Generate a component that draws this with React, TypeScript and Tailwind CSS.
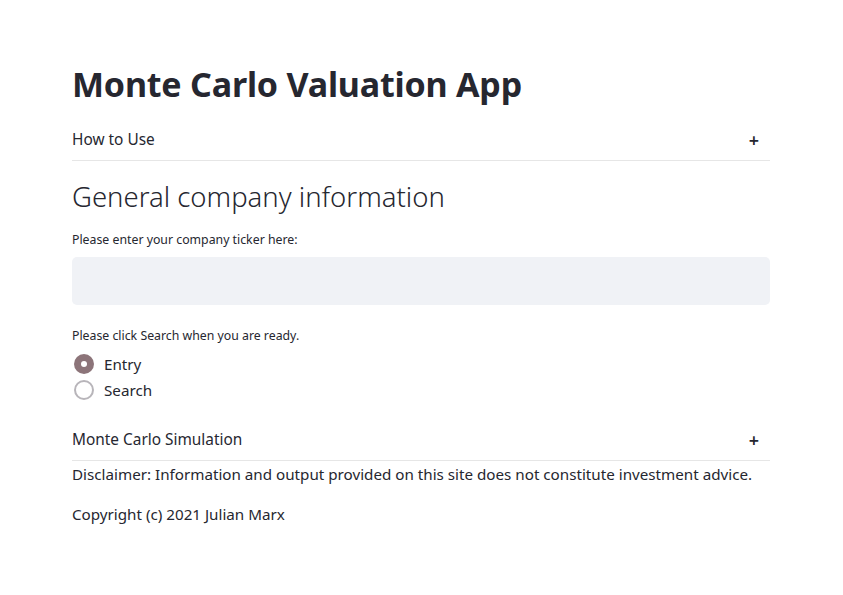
import { useState } from "react";

const font = { fontFamily: "'Noto Sans', 'Open Sans', sans-serif" };

function Expander({ title }: { title: string }) {
  return (
    <div className="flex items-center justify-between h-[42px] border-b border-[#e6e6e6]">
      <span className="text-[15.4px] font-normal text-[#262730]">{title}</span>
      <span className="text-[18px] font-semibold text-[#262730] leading-none mr-[11px]">+</span>
    </div>
  );
}

export default function App() {
  const [choice, setChoice] = useState("Entry");

  return (
    <div className="min-h-[595px] w-full bg-white" style={font}>
      <div className="w-[698px] ml-[72px] pt-[62px]">
        <h1 className="text-[34px] font-bold text-[#262730] leading-[44px] tracking-[-0.2px]">
          Monte Carlo Valuation App
        </h1>

        <div className="mt-[13px]">
          <Expander title="How to Use" />
        </div>

        <h2 className="mt-[19px] text-[27.5px] font-light text-[#262730] leading-[34px]">
          General company information
        </h2>

        <p className="mt-[18px] text-[12.3px] text-[#262730] leading-[16px]">
          Please enter your company ticker here:
        </p>
        <div className="mt-[9px] h-[48px] rounded-[5px] bg-[#f0f2f6]" />

        <p className="mt-[23px] text-[12.3px] text-[#262730] leading-[16px]">
          Please click Search when you are ready.
        </p>
        <div className="mt-[10px] flex flex-col gap-[6px]">
          {["Entry", "Search"].map((opt) => {
            const on = choice === opt;
            return (
              <label
                key={opt}
                className="flex items-center gap-[10px] h-[20px] cursor-pointer"
                onClick={() => setChoice(opt)}
              >
                <span
                  className={
                    on
                      ? "w-[20px] h-[20px] rounded-full bg-[#8c7479] flex items-center justify-center ml-[2px]"
                      : "w-[20px] h-[20px] rounded-full border-2 border-[#b8b5ba] bg-white ml-[2px]"
                  }
                >
                  {on && <span className="w-[6px] h-[6px] rounded-full bg-white" />}
                </span>
                <span className="text-[15.2px] text-[#262730]">{opt}</span>
              </label>
            );
          })}
        </div>

        <div className="mt-[19px]">
          <Expander title="Monte Carlo Simulation" />
        </div>

        <p className="mt-0 text-[15.2px] text-[#262730] leading-[26px]">
          Disclaimer: Information and output provided on this site does not constitute investment advice.
        </p>
        <p className="mt-[14px] text-[15.2px] text-[#262730] leading-[26px]">
          Copyright (c) 2021 Julian Marx
        </p>
      </div>
    </div>
  );
}
